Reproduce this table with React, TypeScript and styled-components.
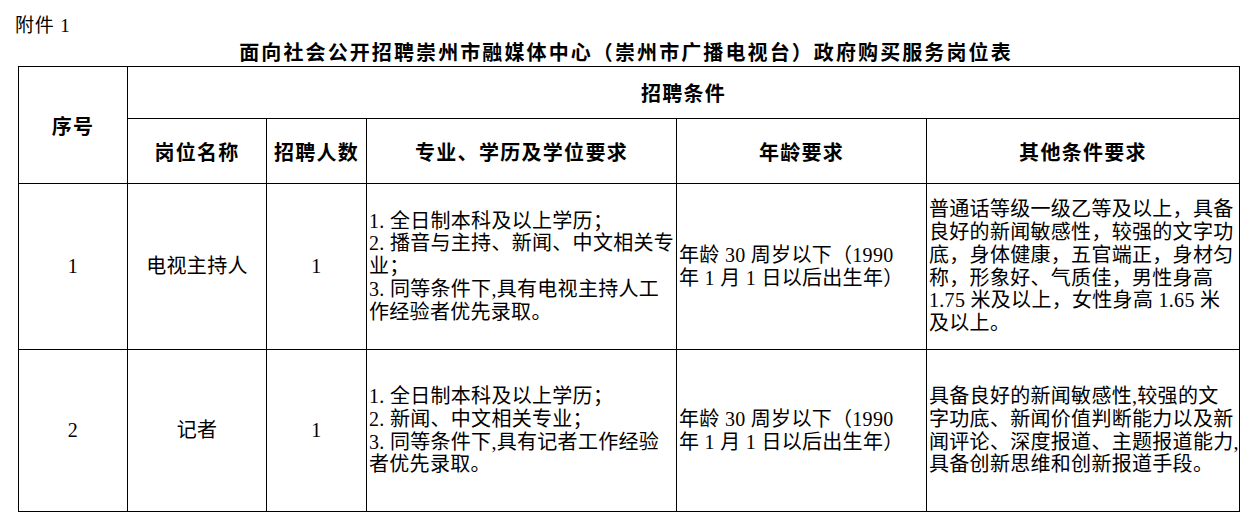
import React from "react";
import styled, { createGlobalStyle } from "styled-components";

const GlobalStyle = createGlobalStyle`
  html, body {
    margin: 0;
    padding: 0;
    background: #fff;
  }
  body {
    font-family: "Liberation Serif", "Noto Sans CJK SC", serif;
    color: #000;
  }
`;

type Job = {
  no: string;
  name: string;
  count: string;
  major: string[];
  age: string[];
  other: string[];
  height: number;
};

const jobs: Job[] = [
  {
    no: "1",
    name: "电视主持人",
    count: "1",
    major: [
      "1. 全日制本科及以上学历；",
      "2. 播音与主持、新闻、中文相关专",
      "业；",
      "3. 同等条件下,具有电视主持人工",
      "作经验者优先录取。",
    ],
    age: ["年龄 30 周岁以下（1990", "年 1 月 1 日以后出生年）"],
    other: [
      "普通话等级一级乙等及以上，具备",
      "良好的新闻敏感性，较强的文字功",
      "底，身体健康，五官端正，身材匀",
      "称，形象好、气质佳，男性身高",
      "1.75 米及以上，女性身高 1.65 米",
      "及以上。",
    ],
    height: 166,
  },
  {
    no: "2",
    name: "记者",
    count: "1",
    major: [
      "1. 全日制本科及以上学历；",
      "2. 新闻、中文相关专业；",
      "3. 同等条件下,具有记者工作经验",
      "者优先录取。",
    ],
    age: ["年龄 30 周岁以下（1990", "年 1 月 1 日以后出生年）"],
    other: [
      "具备良好的新闻敏感性,较强的文",
      "字功底、新闻价值判断能力以及新",
      "闻评论、深度报道、主题报道能力,",
      "具备创新思维和创新报道手段。",
    ],
    height: 162,
  },
];

const Page = styled.div`
  width: 1252px;
  padding-top: 15px;
`;

const Note = styled.div`
  margin-left: 15px;
  font-size: 19px;
  line-height: 22px;
  height: 22px;
  letter-spacing: 0.8px;
`;

const Title = styled.h1`
  margin: 3px 0 0;
  height: 26px;
  line-height: 26px;
  text-align: center;
  font-size: 20px;
  font-weight: 700;
  letter-spacing: 2.1px;
`;

const Table = styled.table`
  margin-left: 18px;
  width: 1222px;
  border-collapse: collapse;
  table-layout: fixed;
`;

const Head = styled.th<{ $h?: number }>`
  border: 1px solid #000;
  height: ${(p) => (p.$h ? `${p.$h}px` : "auto")};
  padding: 0;
  font-size: 20px;
  font-weight: 700;
  letter-spacing: 1.3px;
  text-align: center;
  vertical-align: middle;
`;

const Cell = styled.td<{ $align?: "left" | "center" }>`
  border: 1px solid #000;
  padding: 0 0 0 ${(p) => (p.$align === "left" ? "2px" : "0")};
  font-size: 20px;
  line-height: 22.8px;
  letter-spacing: 0.3px;
  text-align: ${(p) => p.$align || "center"};
  vertical-align: middle;
  overflow: hidden;
`;

const Line = styled.span`
  display: block;
  white-space: nowrap;
`;

const widths = [109, 139, 100, 310, 250, 313];

export default function App() {
  return (
    <Page>
      <GlobalStyle />
      <Note>附件 1</Note>
      <Title>面向社会公开招聘崇州市融媒体中心（崇州市广播电视台）政府购买服务岗位表</Title>
      <Table>
        <colgroup>
          {widths.map((w, i) => (
            <col key={i} style={{ width: w }} />
          ))}
        </colgroup>
        <thead>
          <tr>
            <Head rowSpan={2}>序号</Head>
            <Head colSpan={5} $h={51}>
              招聘条件
            </Head>
          </tr>
          <tr>
            <Head $h={64}>岗位名称</Head>
            <Head>招聘人数</Head>
            <Head>专业、学历及学位要求</Head>
            <Head>年龄要求</Head>
            <Head>其他条件要求</Head>
          </tr>
        </thead>
        <tbody>
          {jobs.map((j) => (
            <tr key={j.no} style={{ height: j.height }}>
              <Cell>{j.no}</Cell>
              <Cell>{j.name}</Cell>
              <Cell>{j.count}</Cell>
              <Cell $align="left">
                {j.major.map((l, i) => (
                  <Line key={i}>{l}</Line>
                ))}
              </Cell>
              <Cell $align="left">
                {j.age.map((l, i) => (
                  <Line key={i}>{l}</Line>
                ))}
              </Cell>
              <Cell $align="left">
                {j.other.map((l, i) => (
                  <Line key={i}>{l}</Line>
                ))}
              </Cell>
            </tr>
          ))}
        </tbody>
      </Table>
    </Page>
  );
}
